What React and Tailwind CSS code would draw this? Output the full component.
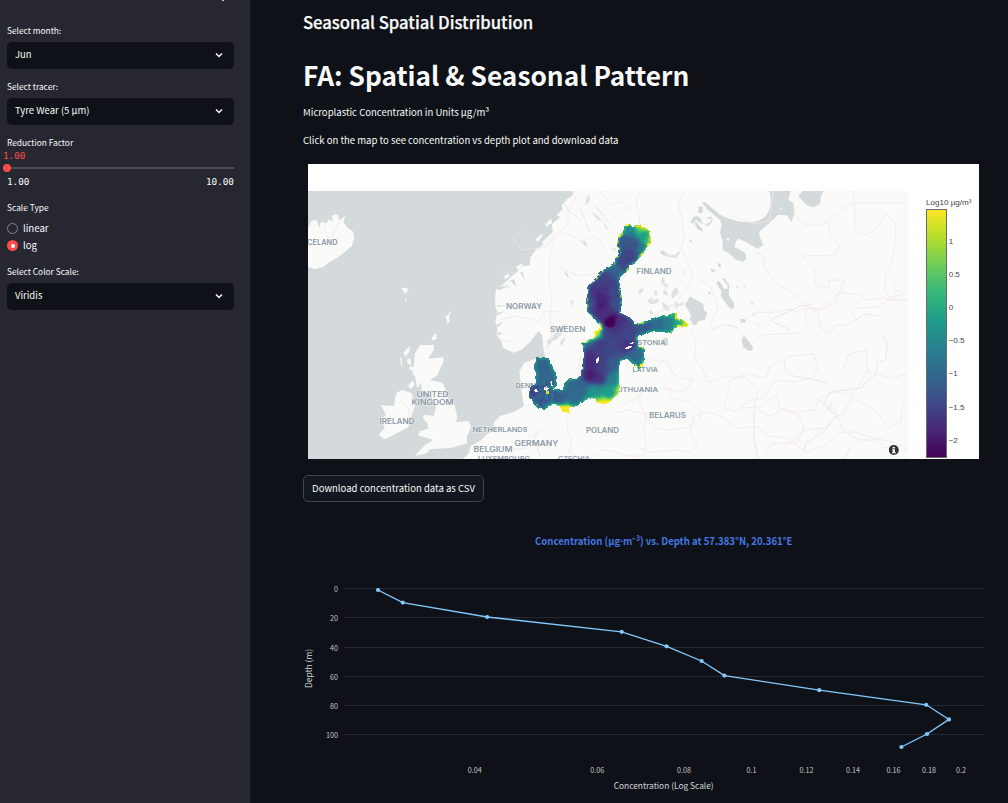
import React from "react";

const SANS = "font-['Noto_Sans_CJK_JP','Open_Sans',sans-serif]";

/* ---------- Concentration field ---------- */

const outline = [
  [376, 103], [388, 102], [396, 109], [420, 105], [438, 113], [452, 123], [455, 162], [446, 165], [435, 182], [420, 202], [405, 218],
  [386, 230], [383, 245], [368, 251], [357, 268], [361, 290], [367, 325], [365, 350], [361, 370], [375, 374], [398, 388], [405, 401],
  [430, 396], [460, 384], [490, 376], [515, 374], [520, 367], [531, 368], [531, 384], [545, 390], [567, 401], [562, 412], [540, 409],
  [524, 414], [513, 431], [500, 427], [460, 424], [435, 431], [413, 438], [412, 460], [416, 470], [432, 470], [434, 495], [430, 520],
  [418, 537], [408, 532], [395, 518], [380, 506], [362, 514], [356, 545], [355, 570], [359, 590], [355, 614], [338, 626], [325, 639],
  [312, 643], [292, 638], [288, 625], [260, 627], [235, 645], [207, 655], [207, 668], [190, 665], [180, 650], [165, 643], [145, 649],
  [132, 658], [117, 655], [100, 640], [93, 626], [85, 622], [87, 598], [95, 588], [106, 580], [107, 560], [110, 550], [102, 535],
  [108, 504], [147, 504], [158, 535], [168, 550], [171, 582], [160, 597], [188, 599], [193, 580], [208, 565], [222, 567], [240, 560],
  [248, 530], [251, 500], [250, 468], [241, 460], [258, 457], [266, 448], [282, 442], [284, 424], [302, 415], [300, 405], [280, 385],
  [262, 365], [259, 330], [265, 285], [285, 268], [300, 247], [320, 233], [340, 222], [346, 205], [357, 190], [355, 178], [349, 163],
  [355, 140], [370, 127],
];

const islands = [
  [[287, 514], [292, 503], [298, 498], [298, 508], [293, 519], [288, 521]],
  [[374, 476], [384, 469], [396, 469], [392, 474], [378, 479]],
  [[389, 461], [400, 455], [401, 459], [392, 463]],
  [[102, 600], [109, 596], [113, 605], [106, 607]],
  [[131, 592], [140, 588], [147, 597], [141, 602], [134, 600]],
  [[151, 575], [155, 573], [158, 588], [153, 586]],
];

const samples = [
  [385, 115, 0.45], [425, 113, 0.8], [449, 150, 0.76], [430, 135, 0.55], [400, 160, 0.26], [375, 155, 0.28], [425, 178, 0.38],
  [390, 190, 0.2], [370, 215, 0.2], [345, 235, 0.32], [310, 270, 0.2], [305, 320, 0.1], [300, 345, 0.08], [315, 295, 0.15],
  [335, 300, 0.22], [348, 340, 0.24], [270, 340, 0.24], [332, 395, -0.1], [315, 372, 0.14], [355, 395, 0.14], [380, 415, 0.2],
  [430, 410, 0.28], [470, 402, 0.34], [505, 400, 0.42], [532, 394, 0.58], [558, 405, 0.84], [350, 440, 0.2], [300, 460, 0.17],
  [272, 510, 0.12], [272, 555, 0.08], [330, 480, 0.22], [335, 520, 0.3], [340, 565, 0.42], [325, 605, 0.54], [280, 605, 0.52],
  [312, 640, 0.95], [355, 603, 0.75], [240, 590, 0.33], [222, 625, 0.34], [196, 664, 1.05], [180, 620, 0.3], [130, 525, 0.32],
  [142, 560, 0.33], [110, 620, 0.3], [88, 618, 0.16], [400, 500, 0.33], [415, 525, 0.42], [422, 485, 0.36], [287, 427, 0.9],
  [382, 462, 0.14], [295, 560, 0.14], [300, 500, 0.18], [320, 430, 0.2], [345, 420, 0.16], [385, 440, 0.22], [310, 530, 0.2],
];

const viridis = [
  [68, 1, 84], [72, 40, 120], [62, 73, 137], [49, 104, 142], [38, 130, 142],
  [31, 158, 137], [53, 183, 121], [110, 206, 88], [181, 222, 43], [253, 231, 37],
];

function colorAt(t) {
  const p = Math.min(0.9999, Math.max(0, t)) * 9;
  const i = Math.floor(p);
  const f = p - i;
  const c = viridis[i].map((v, k) => Math.round(v + (viridis[i + 1][k] - v) * f));
  return `rgb(${c[0]},${c[1]},${c[2]})`;
}

function inside(poly, x, y) {
  let hit = false;
  for (let i = 0, j = poly.length - 1; i < poly.length; j = i++) {
    const [xi, yi] = poly[i];
    const [xj, yj] = poly[j];
    if (yi > y !== yj > y && x < ((xj - xi) * (y - yi)) / (yj - yi) + xi) hit = !hit;
  }
  return hit;
}

function edgeDistance(poly, x, y) {
  let best = 1e9;
  for (let i = 0, j = poly.length - 1; i < poly.length; j = i++) {
    const [ax, ay] = poly[j];
    const [bx, by] = poly[i];
    const dx = bx - ax;
    const dy = by - ay;
    const t = Math.max(0, Math.min(1, ((x - ax) * dx + (y - ay) * dy) / (dx * dx + dy * dy)));
    best = Math.min(best, Math.hypot(x - ax - t * dx, y - ay - t * dy));
  }
  return best;
}

function noise(a, b) {
  const s = Math.sin(a * 127.1 + b * 311.7) * 43758.5453;
  return s - Math.floor(s);
}

const fieldCells = (() => {
  const buckets = {};
  for (let y = 99; y < 675; y += 3) {
    for (let x = 81; x < 573; x += 3) {
      const jx = x + 1.5 + (noise(Math.floor(x / 9), Math.floor(y / 9)) - 0.5) * 4;
      const jy = y + 1.5 + (noise(Math.floor(y / 9), Math.floor(x / 9) + 9) - 0.5) * 4;
      if (!inside(outline, jx, jy) || islands.some((p) => inside(p, x + 1.5, y + 1.5))) continue;
      let sum = 0;
      let weight = 0;
      for (const [sx, sy, v] of samples) {
        const w = 1 / Math.pow((x - sx) ** 2 + (y - sy) ** 2 + 130, 2);
        sum += w * v;
        weight += w;
      }
      let v = sum / weight;
      const d = edgeDistance(outline, x + 1.5, y + 1.5);
      const n = noise(Math.floor(x / 9) + 3, Math.floor(y / 9) + 5);
      if (d < 11) v += (1 - d / 11) * 0.17;
      const coast = y < 400 || x > 400 || (x > 230 && y < 470) ? 0.68 : 0.88;
      if (d < 5 && n > coast) v += 0.14 + (n - coast) * 1.1;
      if (x < 175 && y > 575) v += (n - 0.5) * 0.12;
      if (x > 135 && x < 145 && y > 602 && y < 611) v = 0.95;
      v += (noise(x, y) - 0.5) * 0.015;
      const key = Math.max(0, Math.min(47, Math.round(v * 47)));
      (buckets[key] = buckets[key] || []).push(`M${x} ${y}h3v3h-3z`);
    }
  }
  return Object.entries(buckets).map(([k, parts]) => ({ color: colorAt(k / 47), d: parts.join("") }));
})();

/* ---------- Map ---------- */

const borders = [
  "M572 191l4 8-8 12 0 12-14 16-4 20-1 22 3 16-2 22 2 20-6 10",
  "M640 191l-4 10 3 15 2 20 0 20",
  "M684 193l-6 10 4 16 2 20-3 9 6 12 6 16-8 15-10 12-20 14",
  "M640 392l30-4 0 10 20 4 10 8 0 10-14 8-16 2-14-2-8-10-8-14z",
  "M645 356l14 6 8-2 6 14 10 4 10 2-8 12-14-2",
  "M566 416l2 14 4 12-4 10 14 6 10 0 10-8 14 2 12 4 14 0 4-12-2-14 2-16-18-4-14 3",
  "M539 432l-10 4-4 12-14 2-8 6M640 448l12 4 24-2 14 2 8-8-8-12 4-16 14-4 14 5 16 12 18-3 12 10 18 2 20 14 18-6 18-14 14 0 16 6 22 4 14 9 12-2",
  "M692 330l4 14-2 14 8 10 6 14 18-6 20 2 12 12-4 18 16 8 14-6 14 4 6 14-6 14-16 3",
  "M732 214l4 4 20 6 14-4M770 219l3-28M790 211l16 14 15 0 7-4 20-16 5-2 57 0M829 222v12l10 12-5 9-32 1 12 12 2 18 13 2v-8h16l-4 8-5 14-12 7-10 2-24-20-12-6-14-18 0-10-10-6",
  "M854 191l1 40 10 4 8-4 14-17 8 10 1 18-6 26-4 4-1 16 4 10 12-3 9-3",
  "M755 313l20-1 14-3 8 3 8-5 16 2 18-16 22 1 4 6 20-2 4 3 8-10-4-6 5-3",
  "M908 300l-20 0-10 7-20 1-6 5 4 6-8 6-12 0-6 8-10-6-3-18-12 0 2 16-8 8-36 2-12 10",
  "M730 380l16-6 20 4 4-12 20-10 24-2 4 14-6 10-18 4-20-2-10 18-14 2-14 12-12-4z",
  "M745 408l18-2 14-12 2 14 18 4 18-2 4-12 18-6 16 4-10 18-12 4-4 10-22 2-14 12-20 2-6 10",
  "M853 394l8-12 6-10 0-22-18 4-6 16M867 372l24 6 16-4M855 400l18 8 16 20 12-6 2-22M820 400l6 8 8 0 10 24 14 8 20 0 4 8 20-3",
  "M512 238l10 12 24-3 10-15M500 320l16-4 22 5 8-10 12 1M560 268l20 8 18-3M565 232l16 10 14-6 12 14",
  "M600 191l12 14 8-4 12 10M592 204l12 12M620 406l14-6 14-12M700 280l10 6 8 20-8 20M650 320l16-14 10 0",
  "M400 400l8 8 2 14M322 218l8 28M332 238l6-14 6-8M576 400l3-20 0-20",
];

const rivers = [
  "M883 336l4 8-1 16-6 2M886 352l3-3M878 362l-2 12-10 8-4 6-32 4-6 10 5 6-4 4M832 402l-3 8 8 6-12 14-6 5-13 8-3 10M784 360l1 8 8 8 18 3 16 4",
  "M738 328l-14-4-12 6M610 225l-14-20M590 232l-10-24M560 196l8 14 12 10M520 230l6 12M502 270l14 4M498 285l12 3M500 306l6 0M500 340l14 2M754 410l0 30 4 19M540 456l-6-18 6-8",
  "M790 330l-20-10 30-14 14-2M850 448l-6 11M856 320l8-6 14 2",
];

const lakes = [
  "M556 332l3-2 3-5 4-1-1 5-4 6-4 4-3 2-1-6z",
  "M547 340l9-4-3 5-5 6z",
  "M560 343l4-6 1 2-3 7z",
  "M638 291l4-3 2 2-4 4zM647 300l5-3 1 4 4-3 2 3-4 3-5 0zM662 277l3 2-1 4 4 2-1 3-3-2-3-4zM673 290l3-3 2 2 1 4-4 3-2 3-2-3zM662 302l5 3 3 5-3 1-4-4zM674 301l5 3 4-2 1 3-6 1-2 3zM681 266l2 4 3 4-2-1zM650 310l3 2 0 3-4-2zM664 289l4 4-1 3-4-3zM655 290l3 2-2 4-2-2z",
  "M662 250l4 2 3 3 6 0 4-4 1 2-4 5-7-1-6-2z",
  "M540 208l3 3 1 5-4-3zM580 240l6 2 2 5-4-2zM564 270l4 4 1 5-4-5zM602 218l3 6 4 5-3 0zM590 211l8 5 4 6-6-4zM611 247l5 2-1 3zM570 300l4 2-2 4zM585 205l2-8 3-2-1 7z",
];

const labels = [
  ["CELAND", 307, 245, 30.5, 6.9], ["NORWAY", 506, 309, 36, 6.9], ["FINLAND", 636.5, 274.4, 35, 6.9], ["SWEDEN", 550, 331.5, 35.5, 6.9],
  ["ESTONIA", 633, 345.3, 32.5, 6.7], ["LATVIA", 632.5, 372, 25.5, 6.7], ["LITHUANIA", 616, 392.4, 42, 6.7], ["BELARUS", 649, 417.8, 37, 7],
  ["POLAND", 586, 433, 33, 6.9], ["DENMARK", 515.5, 388, 36, 6.7], ["UNITED", 416.5, 397, 32, 6.9], ["KINGDOM", 411.5, 405.2, 42, 6.9],
  ["IRELAND", 379.5, 424.2, 35, 6.9], ["NETHERLANDS", 472.5, 432, 55, 6.2], ["GERMANY", 514.5, 446, 44, 7.2], ["BELGIUM", 473.5, 452, 39, 7],
  ["LUXEMBOURG", 478, 460.5, 52, 6.2], ["CZECHIA", 558, 461, 32, 6.3],
];

function BasinMap() {
  return (
    <svg viewBox="308 191 600 268" className="block h-[268px] w-[600px]">
      <rect x="308" y="191" width="600" height="268" fill="#fafaf8" />
      <g fill="#d4dadc">
        <g transform="translate(300 160) scale(.33333)">
          <path d="M24 93H543V900H24z" />
          <g fill="#fafaf8" strokeLinejoin="round">
            <path d="M24 205L35 182 50 180 58 205 62 185 80 190 85 178 97 186 97 166 112 162 118 180 136 168 130 185 141 202 160 215 163 235 155 258 135 275 110 295 90 305 70 320 45 328 24 320z" />
            <path d="M360 556L403 554 400 572 384 596 430 592 430 606 412 645 390 660 428 668 437 690 433 702 463 735 472 770 468 787 505 783 513 800 500 832 502 850 455 863 390 868 380 880 345 888 355 875 375 855 400 840 355 826 358 815 385 805 382 790 368 772 372 765 402 767 408 742 395 712 365 692 364 668 352 684 345 650 337 640 342 610 345 580z" />
            <path d="M288 700L305 690 335 700 345 738 330 780 325 802 280 825 255 838 236 826 255 800 240 780 258 765 243 735 282 738z" />
            <path d="M312 575l18-17-2 18-14 15zM320 600l10-5 5 20-10-3zM328 620l12 0 0 12-12-4zM305 385l10-2 12 5-8 6 3 5-8 0-4-7zM315 415l5 3 0 8-4-4zM436 468l10-2 2-10 7-2-6 12-2 10 3 6-8 10-2-12zM395 535l10-14 6 3-4 8 6 2-14 8zM300 590l5 5 2 25-4-5zM330 670l10-8 4 12-10 12-10-6z" />
            <path d="M548 838L512 858 505 882 485 900 548 900z" />
          </g>
        </g>
        <g transform="translate(480 188) scale(.33333)">
          <path d="M-1 9H282L276 25 262 32 245 52 247 65 230 80 240 88 216 108 218 132 186 162 190 170 168 184 150 210 150 232 128 235 110 252 90 270 60 298 47 305 45 350 52 372 46 400 52 420 50 442 62 455 70 480 100 494 125 485 150 462 175 430 186 440 190 480 196 512 165 513 132 525 118 550 122 590 132 655 100 672 60 684 42 702 40 730 22 738 10 750-1 760z" />
          <path fill="#fafaf8" d="M70 267l14-10 6 6-12 10zM108 238l18-12 4 8-16 12zM196 110l14-16 2 8-10 14zM165 155l20-18 2 8-14 16zM206 108l4-14 5 2 0 12z" />
          <path d="M50 300l40-10-34 18zM45 352h26l-14 4zM50 376l26-8-22 14zM50 410l22-10-18 18zM52 432l16 4-14 6zM90 278l18 18-4-22zM120 255l14 18-6-22z" />
        </g>
        <g transform="translate(640 188) scale(.33333)">
          <path d="M387 9C400 50 390 90 345 101C310 107 270 95 240 80L195 42 185 42 200 62 240 95 245 112 240 135 248 160 247 185 265 195 288 215 310 221 318 213 316 196 300 185 284 178 288 160 295 152 318 162 352 182 370 172 357 140 360 128 385 108 415 80 440 82 455 103 463 75 460 45 445 35 452 9z" />
          <path d="M488 9L475 25 500 52 520 58 540 48 543 25 550 9z" />
          <path d="M150 325L190 348 192 365 201 375 195 395 175 400 168 412 157 408 148 390 155 385 135 350z" />
          <path d="M232 278l8 4 12 20 12 0-2-12-16-18 8-2 14 22-2 30 16 24 0 14-8 4-10-10-22-30 2-16-14-20zM302 392l14 2 0 10-14 0zM310 440l20 26 10 14h-30zM158 88l14-4 8 6 8 14 6 4-14-4-10-8-14 4zM168 100l10 14 10 10 0 8-16-10-8-14zM172 58l14-4 4 14-8 10-8-6 2-8zM152 98l12-2 0 8-12 2zM212 240l12 6 2 8-12-4zM234 225l8 2 0 14-8-6zM148 155l6 0 0 8-6-2zM60 188l8 2 6 10-4 2-8-6zM70 450h14v24H70z" />
          <path d="M332 340l8 6 0 6-6-4zM338 372l6 6 0 8-6-6zM290 292l6 4-2 8-4-4zM310 290l8 6-2 4zM205 310l8 2-2 8-6-2zM196 110l12-8 8-10 4 4-10 14-12 6zM200 88l14-2 4 6-14 2z" opacity=".8" />
          <circle cx="423" cy="62" r="3" fill="#fafaf8" />
          <circle cx="264" cy="154" r="4" fill="#fafaf8" />
        </g>
        {lakes.map((d) => (
          <path key={d} d={d} opacity=".75" />
        ))}
        <path d="M742 337l5 6 4 2 2 5-5 1-6-7zM754 321l6 6-2-1z" />
      </g>
      <g fill="none" stroke="#f4e6e8" strokeWidth=".8" strokeLinejoin="round">
        {borders.map((d) => (
          <path key={d} d={d} />
        ))}
      </g>
      <g fill="none" stroke="#dce2e5" strokeWidth=".7" strokeLinejoin="round">
        {rivers.map((d) => (
          <path key={d} d={d} />
        ))}
      </g>
      <g
        className="font-[Inter,'Open_Sans',sans-serif] font-semibold"
        fill="#8b98a4"
        stroke="#ffffff"
        strokeOpacity=".5"
        strokeWidth="1"
        paintOrder="stroke"
      >
        {labels.map(([t, x, y, w, s]) => (
          <text key={t} x={x} y={y} textLength={w} fontSize={s} lengthAdjust="spacingAndGlyphs">
            {t}
          </text>
        ))}
      </g>
      <g transform="translate(500 190) scale(.333333)" shapeRendering="crispEdges">
        {fieldCells.map((c) => (
          <path key={c.color} d={c.d} fill={c.color} />
        ))}
      </g>
      <circle cx="893.8" cy="450" r="5" fill="#333" />
      <path d="M892.7 447h2.2v1.5h-2.2zM892 449.3h2.9v2.9h.9v1h-3.9v-1h.9v-1.9h-.8z" fill="#fff" />
    </svg>
  );
}

const scaleTicks = [
  ["1", 241.3], ["0.5", 274.3], ["0", 307.3], ["−0.5", 340.3], ["−1", 373.3], ["−1.5", 407.3], ["−2", 440.3],
];

function ColorBar() {
  return (
    <svg viewBox="908 191 71 268" className="block h-[268px] w-[71px] font-['Liberation_Sans',Arial,sans-serif]" fill="#444">
      <defs>
        <linearGradient id="bar" x1="0" y1="1" x2="0" y2="0">
          {viridis.map((c, i) => (
            <stop key={i} offset={i / 9} stopColor={`rgb(${c.join(",")})`} />
          ))}
        </linearGradient>
      </defs>
      <text x="926" y="205" fontSize="8" textLength="45.5">
        Log10 µg/m³
      </text>
      <rect x="926.5" y="209.5" width="20" height="248" fill="url(#bar)" stroke="#6b6b6b" />
      {scaleTicks.map(([t, y]) => (
        <text key={t} x="948.7" y={y + 2.8} fontSize="8">
          {t}
        </text>
      ))}
    </svg>
  );
}

/* ---------- Depth profile ---------- */

const profile = [
  [378, 590], [402.8, 602.6], [487.2, 617], [621.7, 631.8], [666.6, 646.3], [701.6, 661], [724.4, 675.6], [819.3, 690.2],
  [926.2, 704.8], [949, 719.4], [927, 734], [901.4, 747],
];
const depthTicks = [[0, 588.5], [20, 617.5], [40, 647.5], [60, 676.5], [80, 705.5], [100, 734.5]];
const concTicks = [
  ["0.04", 474.7], ["0.06", 597.2], ["0.08", 684], ["0.1", 751.4], ["0.12", 806.5], ["0.14", 853.1], ["0.16", 893.6], ["0.18", 929.1], ["0.2", 961],
];

function DepthChart() {
  return (
    <svg viewBox="303 527 705 276" className={`block h-[276px] w-[705px] ${SANS}`}>
      <text x="535" y="544.8" fontSize="10.5" textLength="257.5" lengthAdjust="spacingAndGlyphs" fill="#4577e0" className="font-bold">
        Concentration (µg<tspan className="font-['Open_Sans',sans-serif]">·</tspan>m⁻³) vs. Depth at 57.383°N, 20.361°E
      </text>
      {depthTicks.map(([t, y]) => (
        <g key={t}>
          <path d={`M344 ${y}H984`} stroke="#262831" />
          <text x="338" y={y + 3.4} fontSize="7.2" textAnchor="end" fill="#c4c5c9">
            {t}
          </text>
        </g>
      ))}
      {concTicks.map(([t, x]) => (
        <text key={t} x={x} y="773.2" fontSize="7.2" textAnchor="middle" fill="#c4c5c9">
          {t}
        </text>
      ))}
      <text x="613.7" y="788.7" fontSize="8.4" textLength="100" fill="#d5d6d9">
        Concentration (Log Scale)
      </text>
      <text transform="translate(312 688) rotate(-90)" fontSize="8.4" textLength="39" fill="#d5d6d9">
        Depth (m)
      </text>
      <polyline points={profile.map((p) => p.join(",")).join(" ")} fill="none" stroke="#83c9ff" strokeWidth="1.33" />
      {profile.map(([x, y]) => (
        <circle key={x} cx={x} cy={y} r="2.1" fill="#83c9ff" />
      ))}
    </svg>
  );
}

/* ---------- Sidebar ---------- */

function Label({ children }) {
  return <div className="h-4 text-[8.35px] leading-4 whitespace-nowrap">{children}</div>;
}

function Select({ label, value }) {
  return (
    <div>
      <Label>{label}</Label>
      <div className="mt-1 flex h-[27px] items-center justify-between rounded-[5px] bg-[#0e1117] pr-[10px] pb-px pl-2 text-[9.5px] leading-none">
        <span>{value}</span>
        <svg viewBox="0 0 10 10" className="size-[10px]" fill="none" stroke="#fafafa" strokeWidth="1.5">
          <path d="M2 3.5l3 3 3-3" />
        </svg>
      </div>
    </div>
  );
}

function Radio({ label, checked }) {
  return (
    <div className="flex h-[17px] items-center gap-[5px] text-[9.6px] leading-none">
      {checked ? (
        <span className="flex size-[11px] items-center justify-center rounded-full bg-[#ff4b4b]">
          <span className="size-1 rounded-full bg-white" />
        </span>
      ) : (
        <span className="size-[11px] rounded-full border border-[#85868c] bg-[#262730]" />
      )}
      <span>{label}</span>
    </div>
  );
}

function Sidebar() {
  return (
    <aside className="flex h-full w-[250px] shrink-0 flex-col bg-[#262730] px-[7px] pr-4">
      <div className="flex h-[22px] justify-end pr-[10px]">
        <span className="h-px w-[2px] bg-[#c8c8cc]" />
      </div>
      <div className="flex flex-col gap-[9px]">
        <Select label="Select month:" value="Jun" />
        <Select label="Select tracer:" value="Tyre Wear (5 µm)" />
      </div>
      <div className="mt-[9px] font-['DejaVu_Sans_Mono',monospace] text-[9.33px] leading-[11px]">
        <div className={SANS}>
          <Label>Reduction Factor</Label>
        </div>
        <div className="-ml-1 text-[#ff4b4b]">1.00</div>
        <div className="mt-1 flex h-[6px] items-center">
          <div className="-ml-1 size-2 shrink-0 rounded-full bg-[#ff4b4b]" />
          <div className="h-[2px] flex-1 bg-[#4c4d57]" />
        </div>
        <div className="mt-[5px] flex justify-between">
          <span>1.00</span>
          <span>10.00</span>
        </div>
      </div>
      <div className="mt-3">
        <Label>Scale Type</Label>
        <div className="mt-[5px]">
          <Radio label="linear" />
          <Radio label="log" checked />
        </div>
      </div>
      <div className="mt-[9px]">
        <Select label="Select Color Scale:" value="Viridis" />
      </div>
    </aside>
  );
}

export default function App() {
  return (
    <div className={`flex h-[803px] w-[1008px] overflow-hidden bg-[#0e1117] text-[#fafafa] ${SANS}`}>
      <Sidebar />
      <main className="flex min-w-0 flex-1 flex-col pl-[53px] whitespace-nowrap">
        <h3 className="mt-[10px] h-6 text-[16.65px] leading-6 font-medium [-webkit-text-stroke:0.25px_#fafafa]">
          Seasonal Spatial Distribution
        </h3>
        <h1 className="mt-[21px] h-10 text-[26.25px] leading-10 font-bold">FA: Spatial &amp; Seasonal Pattern</h1>
        <p className="mt-[9px] h-4 text-[9.55px] leading-4">Microplastic Concentration in Units µg/m³</p>
        <p className="mt-3 h-4 text-[9.55px] leading-4">Click on the map to see concentration vs depth plot and download data</p>
        <div className="mt-4 ml-[5px] h-[295px] w-[671px] bg-white pt-[27px]">
          <div className="flex">
            <BasinMap />
            <ColorBar />
          </div>
        </div>
        <button className="mt-4 flex h-[27px] w-[181px] items-center justify-center rounded-[5px] border border-[#41444c] bg-[#131720] text-[9.55px] leading-none">
          Download concentration data as CSV
        </button>
        <div className="mt-[25px]">
          <DepthChart />
        </div>
      </main>
    </div>
  );
}
